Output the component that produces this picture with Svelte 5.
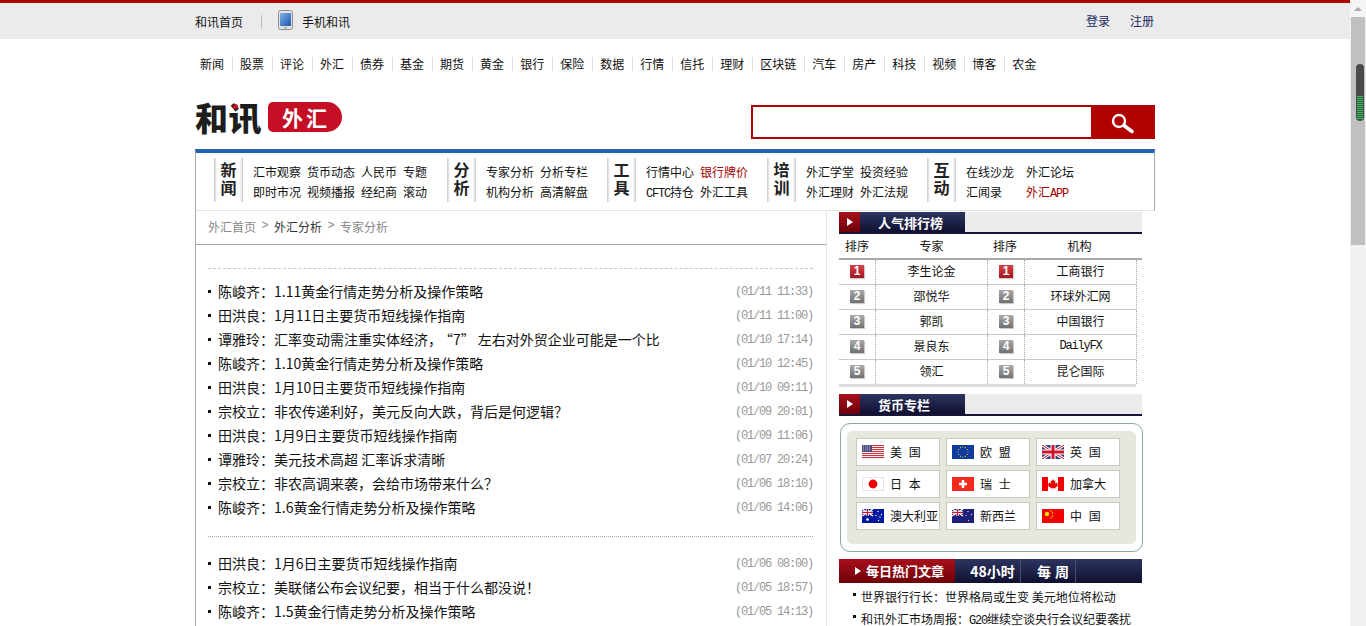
<script>
	const nav = ['新闻', '股票', '评论', '外汇', '债券', '基金', '期货', '黄金', '银行', '保险', '数据', '行情', '信托', '理财', '区块链', '汽车', '房产', '科技', '视频', '博客', '农金'];

	// links: [label, hot, latin part drawn half width]
	const groups = [
		{ title: ['新', '闻'], cols: '48px 48px 36px 24px', width: 233, links: [['汇市观察'], ['货币动态'], ['人民币'], ['专题'], ['即时市况'], ['视频播报'], ['经纪商'], ['滚动']] },
		{ title: ['分', '析'], cols: '48px 48px', width: 160, links: [['专家分析'], ['分析专栏'], ['机构分析'], ['高清解盘']] },
		{ title: ['工', '具'], cols: '48px 48px', width: 160, links: [['行情中心'], ['银行牌价', true], ['持仓', false, 'CFTC'], ['外汇工具']] },
		{ title: ['培', '训'], cols: '48px 48px', width: 160, links: [['外汇学堂'], ['投资经验'], ['外汇理财'], ['外汇法规']] },
		{ title: ['互', '动'], cols: '54px 48px', width: 160, links: [['在线沙龙'], ['外汇论坛'], ['汇闻录'], ['外汇', true, null, 'APP']] }
	];

	const listA = [
		['陈峻齐：1.11黄金行情走势分析及操作策略', '(01/11 11:33)'],
		['田洪良：1月11日主要货币短线操作指南', '(01/11 11:00)'],
		['谭雅玲：汇率变动需注重实体经济，“7”左右对外贸企业可能是一个比', '(01/10 17:14)'],
		['陈峻齐：1.10黄金行情走势分析及操作策略', '(01/10 12:45)'],
		['田洪良：1月10日主要货币短线操作指南', '(01/10 09:11)'],
		['宗校立：非农传递利好，美元反向大跌，背后是何逻辑？', '(01/09 20:01)'],
		['田洪良：1月9日主要货币短线操作指南', '(01/09 11:06)'],
		['谭雅玲：美元技术高超 汇率诉求清晰', '(01/07 20:24)'],
		['宗校立：非农高调来袭，会给市场带来什么？', '(01/06 18:10)'],
		['陈峻齐：1.6黄金行情走势分析及操作策略', '(01/06 14:06)']
	];
	const listB = [
		['田洪良：1月6日主要货币短线操作指南', '(01/06 08:00)'],
		['宗校立：美联储公布会议纪要，相当于什么都没说！', '(01/05 18:57)'],
		['陈峻齐：1.5黄金行情走势分析及操作策略', '(01/05 14:13)']
	];

	const ranks = [
		['李生论金', '工商银行'],
		['邵悦华', '环球外汇网'],
		['郭凯', '中国银行'],
		['景良东', 'DailyFX'],
		['领汇', '昆仑国际']
	];

	const currencies = [
		['us', '美 国'], ['eu', '欧 盟'], ['uk', '英 国'],
		['jp', '日 本'], ['ch', '瑞 士'], ['ca', '加拿大'],
		['au', '澳大利亚'], ['nz', '新西兰'], ['cn', '中 国']
	];
</script>

{#snippet ukJack()}
	<path d="M0 0L22 14M22 0L0 14" stroke="#fff" stroke-width="3" />
	<path d="M0 0L22 14M22 0L0 14" stroke="#cf142b" stroke-width="1" />
	<path d="M11 0V14M0 7H22" stroke="#fff" stroke-width="5" />
	<path d="M11 0V14M0 7H22" stroke="#cf142b" stroke-width="3" />
{/snippet}

{#snippet smallJack()}
	<path d="M0 0L11 7M11 0L0 7" stroke="#fff" stroke-width="1.4" />
	<path d="M5.5 0V7M0 3.5H11" stroke="#fff" stroke-width="2.4" />
	<path d="M5.5 0V7M0 3.5H11" stroke="#cf142b" stroke-width="1.2" />
{/snippet}

{#snippet flag(code)}
	<svg class="flag" viewBox="0 0 22 14" width="22" height="14">
		{#if code === 'us'}
			<rect width="22" height="14" fill="#fff" />
			{#each [0, 2, 4, 6, 8, 10, 12] as y}
				<rect {y} width="22" height="1.1" fill="#c8323c" />
			{/each}
			<rect width="10" height="7" fill="#4a4a80" />
			{#each [1, 3, 5] as y}
				<path d="M1 {y}H9" stroke="#ddd" stroke-width="0.8" stroke-dasharray="1 1" />
			{/each}
		{:else if code === 'eu'}
			<rect width="22" height="14" fill="#0d3a9c" />
			{#each Array(12) as _, i}
				<circle cx={11 + 5 * Math.sin((i * Math.PI) / 6)} cy={7 - 5 * Math.cos((i * Math.PI) / 6)} r="0.6" fill="#ffdd00" />
			{/each}
		{:else if code === 'uk'}
			<rect width="22" height="14" fill="#39407e" />
			{@render ukJack()}
		{:else if code === 'jp'}
			<rect x="0.5" y="0.5" width="21" height="13" fill="#fff" stroke="#e4e4e4" />
			<circle cx="11" cy="7" r="4.4" fill="#ee0000" />
		{:else if code === 'ch'}
			<rect width="22" height="14" fill="#f4291b" />
			<path d="M11 3V11M7 7H15" stroke="#fff" stroke-width="2.6" />
		{:else if code === 'ca'}
			<rect width="22" height="14" fill="#fff" />
			<rect width="6" height="14" fill="#f00000" />
			<rect x="16" width="6" height="14" fill="#f00000" />
			<path d="M11 2L12 4L13.4 3.6L13 6.4L14.6 5.4L15 6.6L16 6.6L15.4 8.4L16 9L13.4 10.4L13.6 11.4L11.2 11L11.2 13H10.8L10.8 11L8.4 11.4L8.6 10.4L6 9L6.6 8.4L6 6.6L7 6.6L7.4 5.4L9 6.4L8.6 3.6L10 4Z" fill="#e60000" />
		{:else if code === 'au'}
			<rect width="22" height="14" fill="#00189c" />
			{@render smallJack()}
			<circle cx="5.5" cy="10.5" r="1.3" fill="#fff" />
			{#each [[16, 2.5], [19.5, 5.5], [14, 6.5], [16.5, 11.5], [18, 8]] as [cx, cy]}
				<circle {cx} {cy} r="0.7" fill="#fff" />
			{/each}
		{:else if code === 'nz'}
			<rect width="22" height="14" fill="#1d2078" />
			{@render smallJack()}
			{#each [[16, 2.5], [19.5, 5.5], [14, 6.5], [16.5, 11.5]] as [cx, cy]}
				<circle {cx} {cy} r="0.7" fill="#e8b0b0" />
			{/each}
		{:else}
			<rect width="22" height="14" fill="#f00000" />
			<circle cx="5" cy="5" r="2.2" fill="#ffe000" />
			{#each [[9, 2], [10.5, 4], [10.5, 7], [9, 9]] as [cx, cy]}
				<circle {cx} {cy} r="0.8" fill="#ffe000" />
			{/each}
		{/if}
	</svg>
{/snippet}

{#snippet tabHead(title)}
	<div class="tab-head">
		<span class="tab-arrow"><i></i></span>
		<span class="tab-title">{title}</span>
	</div>
{/snippet}

{#snippet newsRow(text, time)}
	<li>
		<span class="dot"></span>
		<a>{#each text.split(/([“”])/) as part}{#if part === '“'}<span class="quote-open">{part}</span>{:else if part === '”'}<span class="quote-close">{part}</span>{:else}{part}{/if}{/each}</a>
		<time>{time}</time>
	</li>
{/snippet}

<div class="window">
	<div class="page">
		<header class="top">
			<div class="top-inner">
				<a class="home">和讯首页</a>
				<span class="top-sep"></span>
				<svg class="phone" viewBox="0 0 15 20" width="15" height="20">
					<defs>
						<linearGradient id="scr" x1="0" y1="0" x2="1" y2="1">
							<stop offset="0" stop-color="#7fb2e8" />
							<stop offset="1" stop-color="#1c55b0" />
						</linearGradient>
					</defs>
					<rect x="0.5" y="0.5" width="14" height="19" rx="2" fill="#e2e2e2" stroke="#8f8f8f" />
					<rect x="2" y="3" width="11" height="13" fill="url(#scr)" />
					<rect x="6" y="17" width="3" height="1.6" fill="#aaa" />
				</svg>
				<a class="mobile">手机和讯</a>
				<div class="auth"><a>登录</a><a>注册</a></div>
			</div>
		</header>

		<nav class="channels">
			{#each nav as item, i}
				<a class:first={i === 0}>{item}</a>
			{/each}
		</nav>

		<div class="brand">
			<div class="logo">
				<span class="logo-mark">和讯<i class="logo-dot"></i></span>
				<span class="logo-pill">外汇</span>
			</div>
			<form class="search">
				<input type="text" />
				<button type="button" aria-label="搜索">
					<svg viewBox="0 0 26 22" width="26" height="22">
						<circle cx="9" cy="8" r="6" fill="none" stroke="#fff" stroke-width="2.4" />
						<path d="M14 12.5L22 18.5" stroke="#fff" stroke-width="3.6" stroke-linecap="round" />
					</svg>
				</button>
			</form>
		</div>

		<div class="subnav">
			{#each groups as g}
				<div class="group" style="width:{g.width}px">
					<div class="group-title">{g.title[0]}<br />{g.title[1]}</div>
					<div class="group-links" style="grid-template-columns:{g.cols}">
						{#each g.links as [label, hot, pre, post]}
							<a class:hot>{#if pre}<span class="lat">{pre}</span>{/if}{label}{#if post}<span class="lat">{post}</span>{/if}</a>
						{/each}
					</div>
				</div>
			{/each}
		</div>

		<div class="body">
			<main class="left">
				<div class="crumb">
					<a>外汇首页</a><em>&gt;</em><a class="mid">外汇分析</a><em>&gt;</em><a>专家分析</a>
				</div>
				<div class="lists">
					<ul class="news first-list">
						{#each listA as [text, time]}
							{@render newsRow(text, time)}
						{/each}
					</ul>
					<ul class="news second-list">
						{#each listB as [text, time]}
							{@render newsRow(text, time)}
						{/each}
					</ul>
				</div>
			</main>

			<aside class="right">
				{@render tabHead('人气排行榜')}
				<div class="rank-head">
					<span class="c-rank">排序</span><span class="c-name">专家</span><span class="c-rank">排序</span><span class="c-name">机构</span>
				</div>
				<div class="rank-body">
					{#each ranks as [expert, org], i}
						<div class="rank-row">
							<span class="c-rank cell"><b class="badge" class:top1={i === 0}>{i + 1}</b></span>
							<span class="c-name cell">{expert}</span>
							<span class="c-rank cell"><b class="badge" class:top1={i === 0}>{i + 1}</b></span>
							<span class="c-name cell" class:lat={org === 'DailyFX'}>{org}</span>
						</div>
					{/each}
				</div>

				{@render tabHead('货币专栏')}
				<div class="money">
					<div class="money-inner">
						{#each currencies as [code, name]}
							<a class="cur">{@render flag(code)}<span>{name}</span></a>
						{/each}
					</div>
				</div>

				<div class="hot-tabs">
					<span class="hot-active"><i></i>每日热门文章</span>
					<span class="hot-tab t48">48小时</span>
					<span class="hot-tab tw">每 周</span>
				</div>
				<ul class="hot-list">
					<li><span class="dot"></span>世界银行行长：世界格局或生变 美元地位将松动</li>
					<li><span class="dot"></span>和讯外汇市场周报：<span class="lat">G20</span>继续空谈央行会议纪要袭扰</li>
				</ul>
			</aside>
		</div>
	</div>

	<div class="scrollbar">
		<div class="sb-up"><i></i></div>
		<div class="sb-track">
			<div class="sb-thumb"><div class="sb-green"></div></div>
		</div>
	</div>
</div>

<style>
	:global(body) {
		margin: 0;
		background: #fff;
	}

	a {
		color: inherit;
		text-decoration: none;
	}

	ul {
		list-style: none;
		margin: 0;
		padding: 0;
	}

	.window {
		display: flex;
		height: 626px;
		overflow: hidden;
		font-family: 'Noto Sans CJK SC', 'Liberation Sans', sans-serif;
		font-size: 12px;
		color: #111;
	}

	.lat {
		font-family: 'Liberation Mono', monospace;
		letter-spacing: -1.2px;
	}

	.quote-open {
		padding-left: 4px;
	}

	.quote-close {
		padding-right: 3px;
	}

	.page {
		width: 1350px;
		flex: none;
	}

	.top {
		height: 36px;
		background: #ebebeb;
		border-top: 3px solid #b00000;
	}

	.top-inner {
		width: 960px;
		height: 36px;
		margin: 0 auto;
		display: flex;
		align-items: center;
	}

	.top-sep {
		width: 1px;
		height: 13px;
		background: #bbb;
		margin: 0 16px 0 18px;
	}

	.phone {
		margin-right: 9px;
		margin-top: -3px;
	}

	.auth {
		margin-left: auto;
		margin-right: 1px;
		margin-top: -1px;
		display: flex;
		gap: 20px;
		color: #1c2a5e;
	}

	.channels {
		width: 960px;
		margin: 0 auto;
		height: 50px;
		box-sizing: border-box;
		padding-left: 5px;
		display: flex;
		align-items: center;
	}

	.channels a {
		padding: 0 8px 0 7px;
		line-height: 14px;
		border-left: 1px solid #ddd;
	}

	.channels a.first {
		border-left: 0;
		padding-left: 0;
	}

	.brand {
		width: 960px;
		margin: 0 auto;
		height: 60px;
		display: flex;
		justify-content: space-between;
		align-items: flex-start;
	}

	.logo {
		display: flex;
		margin-top: 13px;
		height: 30px;
		align-items: center;
	}

	.logo-mark {
		position: relative;
		font-size: 33px;
		font-weight: 900;
		letter-spacing: 0.5px;
		color: #1d1d1d;
		line-height: 30px;
	}

	.logo-dot {
		position: absolute;
		left: 38px;
		top: 2px;
		width: 5px;
		height: 5px;
		border-radius: 50%;
		background: #c40f24;
	}

	.logo-pill {
		margin-left: 6px;
		width: 74px;
		height: 30px;
		line-height: 30px;
		box-sizing: border-box;
		padding-left: 14px;
		background: #c40f24;
		color: #fff;
		font-size: 21px;
		font-weight: 700;
		letter-spacing: 3px;
		border-radius: 5px 15px 15px 5px;
	}

	.search {
		display: flex;
		margin: 16px 0 0;
		width: 404px;
		height: 34px;
		background: #b00000;
	}

	.search input {
		width: 338px;
		height: 30px;
		margin: 2px 0 2px 2px;
		padding: 0;
		border: 0;
		background: #fff;
	}

	.search button {
		flex: 1;
		border: 0;
		padding: 4px 0 0;
		background: none;
		display: flex;
		align-items: center;
		justify-content: center;
	}

	.subnav {
		width: 960px;
		margin: 0 auto;
		box-sizing: border-box;
		height: 62px;
		border-top: 4px solid #1f62b3;
		border-left: 1px solid #a8a8a8;
		border-right: 1px solid #a8a8a8;
		border-bottom: 1px solid #e4e4e4;
		padding: 5px 0 0 18px;
		display: flex;
	}

	.group {
		display: flex;
		height: 44px;
	}

	.group-title {
		width: 29px;
		height: 44px;
		box-sizing: border-box;
		padding-top: 2px;
		flex: none;
		text-align: center;
		font-size: 16px;
		font-weight: 700;
		line-height: 18px;
		color: #222;
		background: linear-gradient(90deg, #c8c8c8, #fff 3px, #fff 26px, #c8c8c8);
		margin-right: 10px;
	}

	.group-links {
		display: grid;
		column-gap: 6px;
		grid-auto-rows: 20px;
		padding-top: 4px;
		line-height: 20px;
		white-space: nowrap;
	}

	.hot {
		color: #a60000;
	}

	.body {
		width: 960px;
		margin: 0 auto;
		display: flex;
	}

	.left {
		width: 632px;
		flex: none;
		box-sizing: border-box;
		border-left: 1px solid #a8a8a8;
		border-right: 1px solid #e4e4e4;
		height: 416px;
	}

	.crumb {
		height: 30px;
		padding: 0 0 3px 12px;
		border-bottom: 1px solid #a8a8a8;
		display: flex;
		align-items: center;
		color: #888;
		margin-bottom: -1px;
	}

	.crumb .mid {
		color: #333;
	}

	.crumb em {
		font-style: normal;
		width: 18px;
		text-align: center;
		font-family: 'Liberation Mono', monospace;
	}

	.lists {
		padding: 24px 13px 0 12px;
	}

	.news {
		border-top: 1px dashed #c8c8c8;
		padding: 11px 0 16px;
	}

	.second-list {
		border-top: 1px dotted #a8a8a8;
		padding-top: 15px;
	}

	.news li {
		height: 24px;
		box-sizing: border-box;
		padding-bottom: 2px;
		line-height: 22px;
		font-size: 14px;
		display: flex;
		align-items: center;
		white-space: nowrap;
	}

	.dot {
		width: 3px;
		height: 3px;
		background: #111;
		flex: none;
		margin-right: 7px;
		display: inline-block;
	}

	.news time {
		margin-left: auto;
		padding-top: 2px;
		font-family: 'Liberation Mono', monospace;
		font-size: 12px;
		letter-spacing: -1.2px;
		color: #999;
	}

	.right {
		width: 303px;
		margin-left: 12px;
		flex: none;
		padding-top: 1px;
	}

	.tab-head {
		display: flex;
		height: 20px;
		background: #ebebeb;
		border-bottom: 2px solid #151538;
	}

	.tab-arrow {
		width: 21px;
		background: linear-gradient(#a8101c, #6e0008);
		display: flex;
		align-items: center;
		justify-content: center;
	}

	.tab-arrow i,
	.hot-active i {
		width: 0;
		height: 0;
		border-left: 6px solid #fff;
		border-top: 4px solid transparent;
		border-bottom: 4px solid transparent;
	}

	.tab-title {
		background: linear-gradient(#2c3560, #101030);
		color: #fff;
		font-size: 13px;
		font-weight: 700;
		width: 87px;
		padding-left: 18px;
		line-height: 22px;
	}

	.rank-head {
		display: flex;
		height: 24px;
		line-height: 24px;
		border-bottom: 2px solid #a8a8a8;
		text-align: center;
	}

	.c-rank {
		width: 36px;
		padding-right: 1px;
		flex: none;
		text-align: center;
	}

	.c-name {
		width: 111px;
		flex: none;
		text-align: center;
	}

	.rank-body {
		width: 297px;
		border-bottom: 3px solid #ddd;
		margin-bottom: 7px;
	}

	.rank-row {
		display: flex;
		height: 24px;
		border-bottom: 1px solid #c8c8c8;
	}

	.rank-row:last-child {
		border-bottom: 0;
	}

	.cell {
		line-height: 22px;
		padding-bottom: 2px;
		height: 22px;
		border-right: 1px dotted #aaa;
		display: flex;
		align-items: center;
		justify-content: center;
	}

	.cell.c-rank {
		width: 36px;
		padding-right: 0;
	}

	.badge {
		width: 14px;
		height: 13px;
		line-height: 13px;
		font-size: 12px;
		font-family: 'Liberation Sans', sans-serif;
		font-weight: 700;
		text-align: center;
		color: #fff;
		background: linear-gradient(#aaa, #707070);
		box-shadow: 1px 1px 1px #ccc;
	}

	.badge.top1 {
		background: linear-gradient(#d84048, #a01820);
	}

	.money {
		height: 129px;
		width: 303px;
		margin: 7px 0 7px 1px;
		box-sizing: border-box;
		border: 1px solid #8fa898;
		border-radius: 10px;
		padding: 7px 6px;
		background: #fff;
	}

	.money-inner {
		height: 100%;
		box-sizing: border-box;
		background: #e6e8de;
		border-radius: 6px;
		padding: 7px 9px;
		display: grid;
		grid-template-columns: repeat(3, 84px);
		grid-template-rows: repeat(3, 28px);
		column-gap: 6px;
		row-gap: 4px;
	}

	.cur {
		background: #fff;
		border: 1px solid #c8cac4;
		box-sizing: border-box;
		display: flex;
		align-items: center;
		padding-left: 5px;
		white-space: nowrap;
		word-spacing: 4px;
	}

	.cur span {
		padding-bottom: 2px;
	}

	.flag {
		flex: none;
		margin-right: 6px;
	}

	.hot-tabs {
		height: 24px;
		line-height: 24px;
		display: flex;
		color: #fff;
		font-size: 13px;
		font-weight: 700;
		background: linear-gradient(#2c3560, #101030);
	}

	.hot-active {
		width: 116px;
		flex: none;
		box-sizing: border-box;
		padding-left: 16px;
		display: flex;
		align-items: center;
		gap: 5px;
		background: linear-gradient(#a8101c, #6e0008);
	}

	.hot-tab {
		height: 24px;
		box-sizing: border-box;
		border-right: 1px solid #48506e;
		text-align: center;
		font-size: 14px;
		padding-left: 10px;
	}

	.t48 {
		width: 66px;
	}

	.tw {
		width: 55px;
		word-spacing: 1px;
	}

	.hot-list {
		padding: 3px 0 0 14px;
		width: 289px;
		overflow: hidden;
	}

	.hot-list li {
		height: 22px;
		line-height: 22px;
		white-space: nowrap;
		position: relative;
		padding-left: 8px;
	}

	.hot-list .dot {
		position: absolute;
		left: 0;
		top: 7px;
	}

	.scrollbar {
		width: 16px;
		flex: none;
		background: #f1f1f1;
		display: flex;
		flex-direction: column;
	}

	.sb-up {
		height: 17px;
		display: flex;
		align-items: center;
		justify-content: center;
		background: #f4f4f4;
	}

	.sb-up i {
		width: 0;
		height: 0;
		border-left: 4px solid transparent;
		border-right: 4px solid transparent;
		border-bottom: 4px solid #a8a8a8;
	}

	.sb-track {
		height: 228px;
		margin-left: 1px;
		width: 14px;
		background: #c0c0c0;
		padding: 47px 0 0 5px;
		box-sizing: border-box;
	}

	.sb-thumb {
		width: 8px;
		height: 57px;
		background: #4a4a4a;
		border-radius: 4px;
		box-sizing: border-box;
		padding: 32px 1px 2px;
	}

	.sb-green {
		height: 100%;
		background: repeating-linear-gradient(#22cc55 0 1px, #4a4a4a 1px 2px);
	}
</style>
